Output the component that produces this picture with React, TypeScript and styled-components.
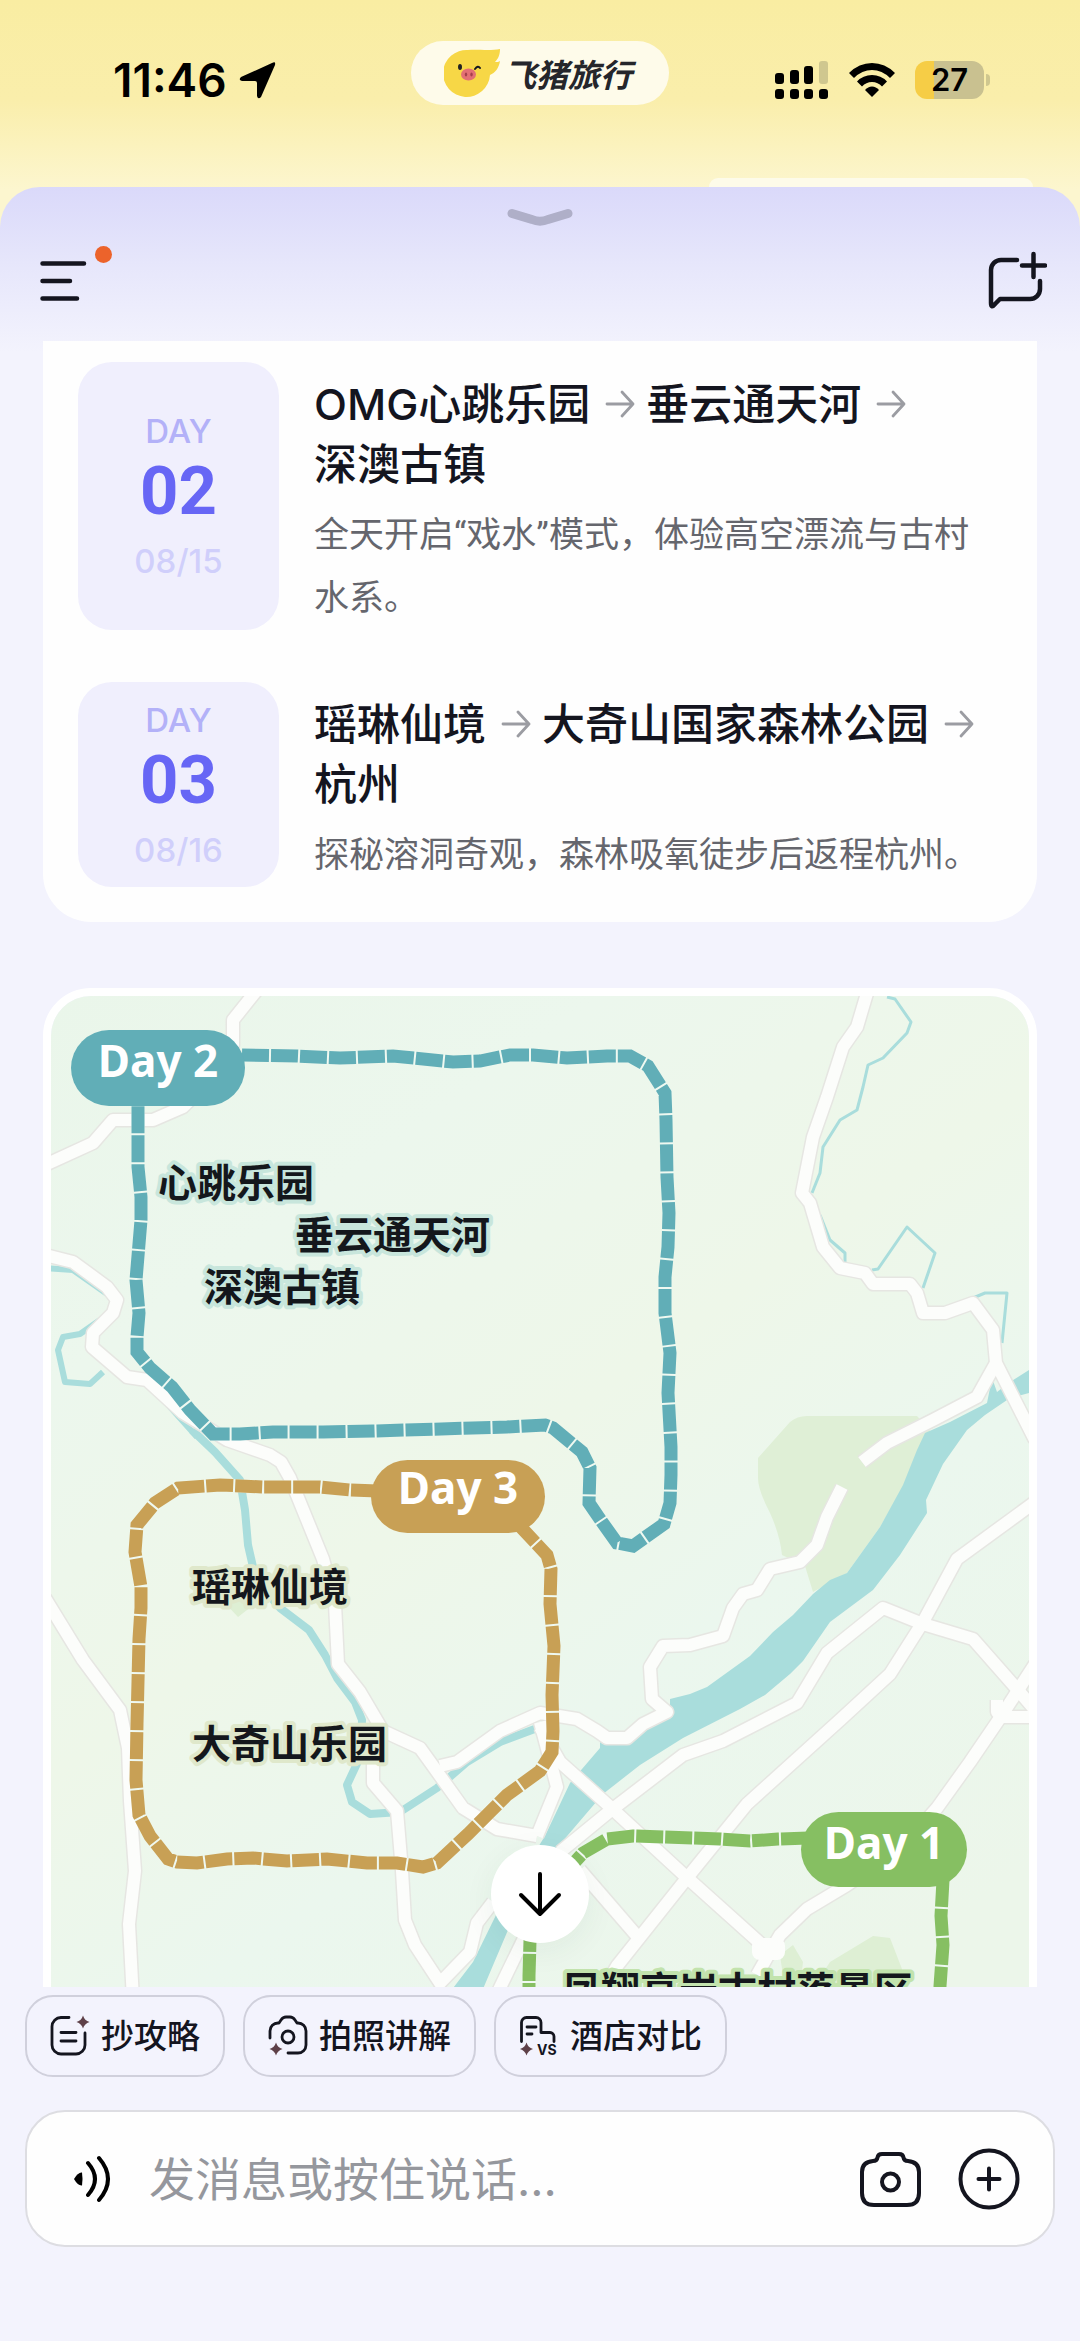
import React from 'react';
import styled, { createGlobalStyle } from 'styled-components';

const GlobalStyle = createGlobalStyle`
  *, *::before, *::after { box-sizing: border-box; }
  body {
    margin: 0;
    font-family: Inter, "Noto Sans CJK SC", sans-serif;
    color: #14151f;
    background: #f3f3fd;
  }
  button, input { font: inherit; color: inherit; }
  button { border: 0; padding: 0; background: none; cursor: pointer; }
  svg { display: block; flex: none; }
`;

const Screen = styled.div`
  display: flex;
  flex-direction: column;
  height: 100vh;
  background: linear-gradient(#f9eda2 0, #faeeab 100px, #fcf6cf 190px);
`;

/* ---------- status bar ---------- */

const TopArea = styled.header`
  display: flex;
  flex-direction: column;
  flex: none;
  height: 187px;
  padding-top: 41px;
`;

const StatusRow = styled.div`
  display: grid;
  grid-template-columns: 1fr 258px 1fr;
  height: 64px;
`;

const StatusSide = styled.div<{ $end?: boolean }>`
  display: flex;
  align-items: center;
  justify-content: ${(p) => (p.$end ? 'flex-end' : 'flex-start')};
  gap: ${(p) => (p.$end ? 20 : 12)}px;
  padding: ${(p) => (p.$end ? '14px 90px 0 0' : '14px 0 0 113px')};
  color: #000;
`;

const Clock = styled.time`
  font-size: 46px;
  font-weight: 600;
  line-height: 50px;
`;

const Capsule = styled.div`
  display: flex;
  align-items: center;
  justify-content: center;
  gap: 3px;
  padding-right: 4px;
  border-radius: 32px;
  background: #fefbea;
`;

const BrandName = styled.span`
  font-family: "Noto Sans CJK SC", sans-serif;
  font-size: 32px;
  font-weight: 700;
  font-style: italic;
  line-height: 40px;
  color: #25262b;
`;

const Battery = styled.div`
  display: flex;
  align-items: center;
  gap: 2px;
`;

const BatteryBody = styled.div`
  width: 69px;
  height: 38px;
  border-radius: 12px;
  background: linear-gradient(90deg, #f6cd46 27%, #c9c190 27%);
  font-size: 31px;
  font-weight: 600;
  line-height: 38px;
  text-align: center;
`;

const BatteryTip = styled.div`
  width: 4px;
  height: 12px;
  border-radius: 0 4px 4px 0;
  background: #cfc78f;
`;

const Peek = styled.div`
  align-self: flex-end;
  width: 30%;
  height: 9px;
  margin: auto 47px 0 0;
  border-radius: 18px 18px 0 0;
  background: #fdfbe9;
`;

/* ---------- sheet ---------- */

const Sheet = styled.div`
  display: flex;
  flex-direction: column;
  flex: 1;
  min-height: 0;
  border-radius: 40px 40px 0 0;
  background: linear-gradient(#dad9fa 0, #e6e6fb 75px, #f3f3fd 165px);
`;

const SheetTop = styled.div`
  display: flex;
  flex-direction: column;
  flex: none;
  height: 154px;
  padding-top: 20px;
`;

const Handle = styled.button`
  align-self: center;
`;

const Toolbar = styled.div`
  display: flex;
  align-items: flex-start;
  justify-content: space-between;
  padding: 16px 33px 0 38px;
`;

const ScrollWrap = styled.div`
  position: relative;
  flex: 1;
  min-height: 0;
`;

const Feed = styled.main`
  display: flex;
  flex-direction: column;
  gap: 66px;
  height: 100%;
  padding: 0 43px;
  overflow: hidden;
`;

const PlanCard = styled.section`
  display: flex;
  flex-direction: column;
  flex: none;
  gap: 52px;
  padding: 21px 35px 35px;
  border-radius: 0 0 48px 48px;
  background: #fefefe;
`;

const PlanRow = styled.article`
  display: flex;
  gap: 35px;
`;

const DateBox = styled.div`
  display: flex;
  flex-direction: column;
  flex: none;
  align-items: center;
  justify-content: center;
  width: 201px;
  border-radius: 34px;
  background: #f0effd;
`;

const DayWord = styled.span`
  font-size: 33px;
  font-weight: 500;
  line-height: 40px;
  color: #b3b1f8;
`;

const DayNumber = styled.span`
  font-family: Roboto, sans-serif;
  font-size: 67px;
  font-weight: 700;
  line-height: 80px;
  color: #6766f5;
`;

const DayDate = styled.span`
  margin-top: 10px;
  font-size: 33px;
  font-weight: 500;
  line-height: 40px;
  color: #d0cffb;
`;

const PlanText = styled.div`
  display: flex;
  flex-direction: column;
  flex: 1;
  gap: 10px;
  padding-top: 12px;
`;

const Stops = styled.h2`
  display: flex;
  flex-wrap: wrap;
  margin: 0;
  font-size: 43px;
  font-weight: 500;
  line-height: 60px;
`;

const Stop = styled.span`
  display: flex;
  align-items: center;
  gap: 15px;
  padding-right: 11px;
  white-space: nowrap;
`;

const Note = styled.p`
  margin: 0;
  font-family: Roboto, "Noto Sans CJK SC", sans-serif;
  font-size: 35px;
  line-height: 63px;
  color: #65666d;
`;

const MapCard = styled.section`
  flex: none;
  border: 8px solid #fff;
  border-radius: 48px;
  overflow: hidden;
`;

const MapDrawing = styled.svg`
  width: 100%;
  height: auto;
`;

const MapLabel = styled.text`
  font-family: "Noto Sans CJK SC", sans-serif;
  font-size: 39px;
  font-weight: 700;
  fill: #14171c;
  stroke-width: 8px;
  stroke-linejoin: round;
  paint-order: stroke;
`;

const BadgeLabel = styled.text`
  font-family: "Noto Sans", sans-serif;
  font-size: 44px;
  font-weight: 700;
  fill: #fff;
  text-anchor: middle;
`;

const DownButton = styled.button`
  position: absolute;
  bottom: 44px;
  left: 50%;
  display: flex;
  align-items: center;
  justify-content: center;
  width: 98px;
  height: 98px;
  margin-left: -49px;
  border-radius: 50%;
  background: #fff;
  box-shadow: 0 8px 32px rgba(30, 60, 50, 0.06);
`;

/* ---------- composer ---------- */

const Composer = styled.footer`
  display: flex;
  flex-direction: column;
  flex: none;
  gap: 33px;
  padding: 8px 25px 94px;
`;

const Chips = styled.div`
  display: flex;
  gap: 18px;
`;

const Chip = styled.button`
  display: flex;
  align-items: center;
  gap: 11px;
  height: 82px;
  padding: 0 23px;
  border: 2px solid #d0d0dc;
  border-radius: 28px;
  font-size: 33px;
  font-weight: 500;
  line-height: 48px;
  white-space: nowrap;
`;

const InputBar = styled.form`
  display: flex;
  align-items: center;
  height: 137px;
  padding: 0 32px 0 47px;
  border: 2px solid #dddde2;
  border-radius: 40px;
  background: #fefefe;
`;

const MessageInput = styled.input`
  flex: 1;
  min-width: 0;
  margin: 0 37px;
  padding: 0;
  border: 0;
  outline: 0;
  background: none;
  font-size: 46px;
  line-height: 64px;
  &::placeholder { color: #95979d; opacity: 1; }
`;

const InputActions = styled.div`
  display: flex;
  gap: 35px;
`;

/* ---------- icons ---------- */

const stroke = {
  fill: 'none',
  stroke: '#14151f',
  strokeLinecap: 'round' as const,
  strokeLinejoin: 'round' as const,
};

const Pig = () => (
  <svg width="57" height="48" viewBox="0 0 57 48" aria-hidden="true">
    <path
      d="M24 1C32 0 46 2 56 0c0 6-2 10-5 13 2 0 4 0 5-1-1 7-5 12-10 14A23.500 23.500 0 1 1 24 1Z"
      fill="#f7d746"
    />
    <ellipse cx="16" cy="18" rx="2" ry="3" fill="#222" />
    <path d="M31 20q3-4 5-1" {...stroke} strokeWidth="2" />
    <ellipse cx="24.500" cy="25.500" rx="7.500" ry="6" fill="#e36f74" />
    <ellipse cx="22" cy="25.500" rx="1.200" ry="2" fill="#a53f4b" />
    <ellipse cx="27.500" cy="25.500" rx="1.200" ry="2" fill="#a53f4b" />
  </svg>
);

const Signal = () => (
  <svg width="54" height="38" viewBox="0 0 54 38" aria-hidden="true">
    <rect x="0" y="12" width="9" height="11" rx="3" />
    <rect x="15" y="9" width="9" height="14" rx="3" />
    <rect x="29" y="5" width="9" height="18" rx="3" />
    <rect x="44" y="0" width="9" height="23" rx="3" fill="#cfc78f" />
    {[0, 15, 29, 44].map((x) => (
      <rect key={x} x={x} y="28" width="9" height="10" rx="3" />
    ))}
  </svg>
);

const Wifi = () => (
  <svg width="46" height="34" viewBox="0 0 46 34" aria-hidden="true">
    <path d="M0 10Q10 0 23 0T46 10L41 15Q33 7 23 7T5 15Z" />
    <path d="M8 18.500Q14 12 23 12T38 18.500L33 23.500Q29 19 23 19T13 23.500Z" />
    <path d="M16 27Q19 23.500 23 23.500T30 27L23 34Z" />
  </svg>
);

const Sparkle = ({ x, y }: { x: number; y: number }) => (
  <path
    transform={`translate(${x} ${y})`}
    d="M0-6.500Q1.500-1.500 6.500 0 1.500 1.500 0 6.500-1.500 1.500-6.500 0-1.500-1.500 0-6.500Z"
    fill="#5e4048"
  />
);

const NotesIcon = () => (
  <svg width="40" height="42" viewBox="1 0 40 42" aria-hidden="true">
    <g {...stroke} strokeWidth="2.800">
      <path d="M20 2.500H12a9 9 0 0 0-9 9V30a9 9 0 0 0 9 9H27a9 9 0 0 0 9-9V18" />
      <path d="M12 17.500H27M12 26H27" />
    </g>
    <Sparkle x={34} y={7} />
  </svg>
);

const PhotoGuideIcon = () => (
  <svg width="40" height="42" viewBox="1 0 40 42" aria-hidden="true">
    <g {...stroke} strokeWidth="2.800">
      <path d="M3 23V16a8 8 0 0 1 8-8h1l2-3q2-3 5-3h4q3 0 5 3l2 3h1a8 8 0 0 1 8 8V30a8 8 0 0 1-8 8H21" />
      <circle cx="21" cy="22" r="6" />
    </g>
    <Sparkle x={9} y={34} />
  </svg>
);

const HotelIcon = () => (
  <svg width="40" height="42" viewBox="1 0 40 42" aria-hidden="true">
    <g {...stroke} strokeWidth="2.800">
      <path d="M3.500 26.500V7.500a5 5 0 0 1 5-5H18a5 5 0 0 1 5 5V17.500H32a4 4 0 0 1 4 4V26.500" />
      <path d="M9 12H18M9 19H14" />
    </g>
    <Sparkle x={8.5} y={34} />
    <text x="19" y="40" fontSize="14" fontWeight="700" fill="#14151f">VS</text>
  </svg>
);

/* ---------- map ---------- */

const ROADS = [
  'M257 990L233 1020V1045L200 1090L183 1107L153 1120H113L93 1143L45 1165',
  'M45 1255L73 1262L107 1287L117 1300L113 1313L93 1333L92 1347L127 1377L147 1380L183 1413L227 1440L270 1455L281 1462L290 1478L323 1559L335 1604L338 1664L360 1692L383 1731L420 1748L433 1766L463 1808L497 1829L537 1836',
  'M373 1735V1783L397 1811L402 1871L405 1920L415 1945L440 1983L470 1952L477 1923L493 1902',
  'M440 1766L457 1762L500 1731L540 1713L577 1719L597 1731L607 1738H627L643 1724L667 1712L652 1699L650 1667L663 1646L690 1645L723 1636L733 1608L743 1594L757 1590L770 1569L800 1562L817 1545L827 1517L842 1487',
  'M540 1727L560 1762L607 1804L683 1874L770 1952L757 1975',
  'M770 1952L780 1935L807 1909L847 1885L900 1850L937 1808L970 1762L1002 1715L1035 1664',
  'M1035 1502L957 1559L923 1622L890 1674L840 1720L747 1804L687 1878L617 1966L600 1995',
  'M1035 1710L1017 1689L973 1639L923 1624L883 1608L827 1653L797 1703L723 1741L683 1755L610 1811L560 1852',
  'M997 1700V1712L1002 1717H1035',
  'M580 1870L637 1936',
  'M537 1836L557 1787L550 1760L540 1722',
  'M45 1598L83 1660L120 1710L128 1748L130 1801L135 1871L129 1924L133 2000',
  'M528 1930L495 1998',
  'M868 990L857 1027L843 1047L827 1097L813 1137L802 1193L810 1203L823 1247L840 1268L865 1273L873 1284H910L917 1293L923 1313H945L973 1303L993 1330L996 1363L1035 1440',
  'M996 1363L977 1397L933 1420L887 1443L862 1462',
];

const CREEKS = [
  { w: 3, d: 'M887 997L895 999L911 1022L907 1033L883 1058L868 1065L863 1087L857 1110L840 1120L823 1147L820 1173L812 1193M820 1215L830 1240L845 1253V1265M872 1270L878 1269L907 1227L935 1253L923 1288M973 1298L985 1293H1007L1002 1343' },
  { w: 6, d: 'M45 1268L73 1270L110 1296M100 1320L80 1334L63 1337L58 1350L65 1382L90 1384L103 1372M153 1388L197 1437' },
  { w: 8, d: 'M192 1430L215 1452L240 1480L245 1510L248 1545L256 1580L280 1608L309 1630L325 1655L337 1678L355 1702L362 1720L361 1755L347 1785L352 1802L370 1814L400 1812L437 1788L467 1762L500 1742L540 1727' },
];

interface DayRoute {
  day: number;
  color: string;
  halo: string;
  path: string;
  badge: { x: number; y: number; w: number; h: number };
  baseline: number;
  places: { name: string; x: number; y: number }[];
}

const ROUTES: DayRoute[] = [
  {
    day: 2,
    color: '#61aeb7',
    halo: '#c8e6dc',
    path: 'M242 1055L297 1056L340 1058L393 1056L453 1062L480 1061L510 1055H533L567 1058L607 1056H630L648 1066L665 1093L666 1120L667 1177L669 1213L668 1247L665 1277V1313L670 1353L668 1393L671 1447V1475L670 1503L664 1524L633 1546L617 1543L602 1522L589 1503L590 1468L582 1452L553 1428L545 1425L507 1427L373 1431L323 1432H273L240 1434H213L190 1410L172 1387L150 1368L137 1352V1337L139 1313L136 1280L141 1220V1197L138 1167V1095',
    badge: { x: 71, y: 1030, w: 174, h: 76 },
    baseline: 1077,
    places: [
      { name: '心跳乐园', x: 158, y: 1197 },
      { name: '垂云通天河', x: 295, y: 1249 },
      { name: '深澳古镇', x: 204, y: 1301 },
    ],
  },
  {
    day: 3,
    color: '#c8a055',
    halo: '#dfe8cb',
    path: 'M378 1491L350 1490L320 1487H263L220 1485L178 1488L155 1503L137 1525L135 1552L141 1587V1608L139 1639L137 1724L136 1780L139 1815L150 1836L168 1859L177 1862L197 1863L227 1859L253 1858L287 1861L327 1859L367 1863H397L423 1867L437 1863L468 1834L507 1795L540 1771L552 1752L553 1731L552 1695L554 1646L550 1604L551 1569L547 1555L518 1524',
    badge: { x: 371, y: 1460, w: 174, h: 73 },
    baseline: 1504,
    places: [
      { name: '瑶琳仙境', x: 192, y: 1601 },
      { name: '大奇山乐园', x: 192, y: 1758 },
    ],
  },
  {
    day: 1,
    color: '#86bf62',
    halo: '#c2e3ad',
    path: 'M808 1838L778 1839L750 1841L720 1839L633 1836L607 1839L583 1853L540 1900L530 1941L529 1976V2100M943 1880L941 1916L943 1945L940 1986V2100',
    badge: { x: 801, y: 1812, w: 166, h: 75 },
    baseline: 1859,
    places: [{ name: '凤翔高岩古村落景区', x: 562, y: 2005 }],
  },
];

const RouteMap = () => (
  <MapDrawing viewBox="51 996 978 1150" role="img" aria-label="三日路线地图">
    <defs>
      <linearGradient id="land" x1="0" y1="0" x2="0.600" y2="1">
        <stop offset="0" stopColor="#eaf6ea" />
        <stop offset="0.250" stopColor="#ecf7ed" />
        <stop offset="0.500" stopColor="#eef7e9" />
        <stop offset="0.700" stopColor="#ebf7ee" />
        <stop offset="1" stopColor="#ecf6ea" />
      </linearGradient>
    </defs>
    <rect x="51" y="996" width="978" height="1150" fill="url(#land)" />
    <path
      d="M758 1458L790 1422Q797 1416 807 1416H917L930 1430L907 1480L880 1527L847 1573L813 1592L805 1566L782 1555Q780 1535 770 1513Q758 1490 758 1478Z"
      fill="#dfefd6"
    />
    <path
      d="M793 1945L803 1962L800 1990H900L902 1969L890 1938L873 1936L830 1962L815 1985L785 1990L780 1955ZM222 1600L238 1617L260 1600Z"
      fill="#deefd4"
    />
    <g fill="none" stroke="#a9dddc" strokeLinejoin="round">
      {CREEKS.map((c) => (
        <path key={c.w} d={c.d} strokeWidth={c.w} />
      ))}
    </g>
    <path
      d="M1029 1370L1010 1382L997 1392L992 1378L987 1403L950 1422L925 1433L917 1450L903 1485L880 1527L847 1573L830 1580L813 1594L793 1615L773 1632L750 1656L707 1687L690 1694L670 1699V1711L650 1716L625 1740L600 1742L580 1720L568 1718L600 1736V1748L570 1783L545 1836L497 1913L473 1962L447 1996H480L508 1930L562 1842L603 1794L640 1765L683 1738L740 1709L765 1695L790 1674L803 1661L830 1622L873 1590L900 1555L927 1513L926 1500L943 1464L967 1430L985 1415L1010 1398L1029 1393Z"
      fill="#a9dddc"
    />
    <g fill="none" strokeLinejoin="round">
      <g stroke="#e6e6e2" strokeWidth="15">
        {ROADS.map((d) => (
          <path key={d} d={d} />
        ))}
      </g>
      <g stroke="#fcfdfb" strokeWidth="12">
        {ROADS.map((d) => (
          <path key={d} d={d} />
        ))}
      </g>
    </g>
    <rect x="752" y="1938" width="33" height="22" rx="8" fill="#fcfdfb" />
    {ROUTES.map((r) => (
      <g key={r.day}>
        <g fill="none" strokeWidth="13">
          <path d={r.path} stroke="#eff9f1" />
          <path d={r.path} stroke={r.color} strokeDasharray="27 2" />
        </g>
        <rect
          x={r.badge.x}
          y={r.badge.y}
          width={r.badge.w}
          height={r.badge.h}
          rx={r.badge.h / 2}
          fill={r.color}
        />
        <BadgeLabel x={r.badge.x + r.badge.w / 2} y={r.baseline}>
          Day {r.day}
        </BadgeLabel>
        {r.places.map((p) => (
          <MapLabel key={p.name} x={p.x} y={p.y} stroke={r.halo}>
            {p.name}
          </MapLabel>
        ))}
      </g>
    ))}
  </MapDrawing>
);

/* ---------- data ---------- */

const DAYS = [
  {
    no: '02',
    date: '08/15',
    stops: ['OMG心跳乐园', '垂云通天河', '深澳古镇'],
    note: '全天开启“戏水”模式，体验高空漂流与古村水系。',
  },
  {
    no: '03',
    date: '08/16',
    stops: ['瑶琳仙境', '大奇山国家森林公园', '杭州'],
    note: '探秘溶洞奇观，森林吸氧徒步后返程杭州。',
  },
];

const CHIPS = [
  { label: '抄攻略', Icon: NotesIcon },
  { label: '拍照讲解', Icon: PhotoGuideIcon },
  { label: '酒店对比', Icon: HotelIcon },
];

export default function App() {
  return (
    <Screen>
      <GlobalStyle />
      <TopArea>
        <StatusRow>
          <StatusSide>
            <Clock>11:46</Clock>
            <svg width="37" height="37" viewBox="0 0 37 37" aria-hidden="true">
              <path d="M33 1Q37-1 36 3L22 35Q19 38 18 34V21Q18 19 16 19H3Q-1 18 2 15Z" />
            </svg>
          </StatusSide>
          <Capsule>
            <Pig />
            <BrandName>飞猪旅行</BrandName>
          </Capsule>
          <StatusSide $end>
            <Signal />
            <Wifi />
            <Battery>
              <BatteryBody>27</BatteryBody>
              <BatteryTip />
            </Battery>
          </StatusSide>
        </StatusRow>
        <Peek />
      </TopArea>

      <Sheet>
        <SheetTop>
          <Handle aria-label="收起">
            <svg width="66" height="22" viewBox="0 0 66 22" aria-hidden="true">
              <path d="M5 6.500L25 12.500Q33 16 41 12.500L61 6.500" {...stroke} stroke="#afafc8" strokeWidth="9" />
            </svg>
          </Handle>
          <Toolbar>
            <button aria-label="菜单">
              <svg width="76" height="60" viewBox="0 0 76 60" aria-hidden="true">
                <path d="M4.500 18.500H46M4.500 36H32M4.500 53.500H39" {...stroke} strokeWidth="4.500" />
                <circle cx="65.500" cy="9.500" r="8.500" fill="#ec632b" />
              </svg>
            </button>
            <button aria-label="新对话">
              <svg width="60" height="66" viewBox="0 -10 60 66" aria-hidden="true">
                <path
                  d="M30 5H14A10 10 0 0 0 4 15V48Q4 54 8 49L13 44H43A10 10 0 0 0 53 34V26M35 10.500H58M46.500-1V22"
                  {...stroke}
                  strokeWidth="4.500"
                />
              </svg>
            </button>
          </Toolbar>
        </SheetTop>

        <ScrollWrap>
          <Feed>
            <PlanCard>
              {DAYS.map((d) => (
                <PlanRow key={d.no}>
                  <DateBox>
                    <DayWord>DAY</DayWord>
                    <DayNumber>{d.no}</DayNumber>
                    <DayDate>{d.date}</DayDate>
                  </DateBox>
                  <PlanText>
                    <Stops>
                      {d.stops.map((s, i) => (
                        <Stop key={s}>
                          {s}
                          {i < d.stops.length - 1 && (
                            <svg width="30" height="28" viewBox="0 0 30 28" aria-hidden="true">
                              <path d="M2 14H28M17 2L28 14L17 26" {...stroke} stroke="#9b9ca2" strokeWidth="2.800" />
                            </svg>
                          )}
                        </Stop>
                      ))}
                    </Stops>
                    <Note>{d.note}</Note>
                  </PlanText>
                </PlanRow>
              ))}
            </PlanCard>
            <MapCard>
              <RouteMap />
            </MapCard>
          </Feed>
          <DownButton aria-label="回到底部">
            <svg width="46" height="48" viewBox="0 0 46 48" aria-hidden="true">
              <path d="M23 4V44M4 25L23 44L42 25" {...stroke} stroke="#000" strokeWidth="4" />
            </svg>
          </DownButton>
        </ScrollWrap>

        <Composer>
          <Chips>
            {CHIPS.map(({ label, Icon }) => (
              <Chip key={label}>
                <Icon />
                {label}
              </Chip>
            ))}
          </Chips>
          <InputBar onSubmit={(e) => e.preventDefault()}>
            <button type="button" aria-label="语音输入">
              <svg width="38" height="48" viewBox="0 0 38 48" aria-hidden="true">
                <path d="M0 24Q4 17 8 17.500Q9 24 8 30.500Q4 31 0 24Z" />
                <path d="M14 8Q28 24 14 40M25 3Q43 24 25 45" {...stroke} stroke="#000" strokeWidth="4" />
              </svg>
            </button>
            <MessageInput aria-label="消息" placeholder="发消息或按住说话..." />
            <InputActions>
              <button type="button" aria-label="拍照">
                <svg width="64" height="64" viewBox="0 -3 64 64" aria-hidden="true">
                  <path
                    d="M24 4H41Q45 4 45.500 7.500Q46 11 50 11Q61 12 61 22V43Q61 55 49 55H16Q4 55 4 43V22Q4 12 15 11Q19 11 19.500 7.500Q20 4 24 4Z"
                    {...stroke}
                    strokeWidth="4"
                  />
                  <circle cx="32.500" cy="32" r="8.500" {...stroke} strokeWidth="4" />
                </svg>
              </button>
              <button type="button" aria-label="更多">
                <svg width="64" height="64" viewBox="0 0 64 64" aria-hidden="true">
                  <circle cx="32" cy="32" r="28.500" {...stroke} strokeWidth="4" />
                  <path d="M21.500 32H42.500M32 21.500V42.500" {...stroke} strokeWidth="4" />
                </svg>
              </button>
            </InputActions>
          </InputBar>
        </Composer>
      </Sheet>
    </Screen>
  );
}
